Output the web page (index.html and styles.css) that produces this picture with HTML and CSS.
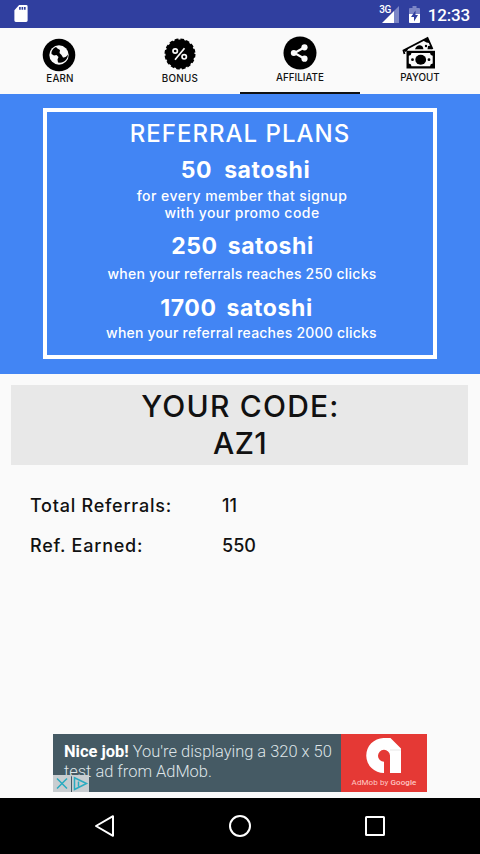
FILE: index.html
```html
<!DOCTYPE html>
<html lang="en">
<head>
    <meta charset="UTF-8">
    <meta name="viewport" content="width=device-width, initial-scale=1.0">

    <title>Affiliate</title>

    <link rel="stylesheet" href="styles.css">
</head>
<body>

    <div class="screen">

        <div class="status-bar">
            <svg class="sd-card" width="14" height="17" viewBox="0 0 14 18">
                <path d="M5 0h7.500a1.500 1.500 0 0 1 1.500 1.500v15a1.500 1.500 0 0 1-1.500 1.500h-11A1.500 1.500 0 0 1 0 16.500V5.500z" fill="#fff"/>
                <path d="M5 2h1.700v3H5zM7.600 2h1.700v3H7.600zM10.200 2h1.700v3h-1.700z" fill="#303f9f"/>
            </svg>
            <div class="status-icons">
                <span class="network">3G</span>
                <svg class="signal" width="17" height="17" viewBox="0 0 17 17">
                    <path d="M17 0v17h-5V5z" fill="#7c86c6"/>
                    <path d="M12 5v12H0z" fill="#fff"/>
                </svg>
                <svg class="battery" width="11" height="17" viewBox="0 0 11 17">
                    <path d="M3.500 0h4v2H10a1 1 0 0 1 1 1v13a1 1 0 0 1-1 1H1a1 1 0 0 1-1-1V3a1 1 0 0 1 1-1h2.500z" fill="#7c86c6"/>
                    <path d="M0 8h11v8a1 1 0 0 1-1 1H1a1 1 0 0 1-1-1z" fill="#fff"/>
                    <path d="M6.500 4.500L2 11h3v4.500L9 9H6.500z" fill="#303f9f"/>
                </svg>
                <span class="clock">12:33</span>
            </div>
        </div>

        <div class="tabs">
            <div class="tab tab-earn">
                <svg width="34" height="34" viewBox="0 0 34 34">
                    <circle cx="17" cy="17" r="16.300"/>
                    <circle cx="17" cy="17" r="9.700" fill="#fafafa"/>
                    <path d="M9.500 14c.8-2.500 2.500-4.200 4.500-5l1.500 1.500 2.500 1.500-.5 3 2 2 1.500 2.500c2 .3 3.500-1 5-3-.3 4.500-3.500 8-8 8.300l-2-.3-.5-3 1-2.500-2-2-2.500.5-2.500-1.500z"/>
                </svg>
                <span>EARN</span>
            </div>
            <div class="tab tab-bonus">
                <svg width="34" height="34" viewBox="0 0 34 34">
                    <circle cx="17" cy="17" r="14.500"/>
                    <circle cx="17" cy="17" r="14.300" fill="none" stroke="#000" stroke-width="2.400" stroke-dasharray="3.600 2.016"/>
                    <g fill="none" stroke="#fafafa" stroke-width="1.700">
                        <circle cx="12.200" cy="14" r="2.200"/>
                        <circle cx="21.200" cy="19.800" r="2.200"/>
                        <path d="M21.500 11.200l-9.500 11.500"/>
                    </g>
                </svg>
                <span>BONUS</span>
            </div>
            <div class="tab tab-affiliate active">
                <svg width="34" height="34" viewBox="0 0 34 34">
                    <circle cx="17" cy="17" r="16.500"/>
                    <path d="M21.500 11.200L11.500 17l10 5.800" fill="none" stroke="#fafafa" stroke-width="2.200"/>
                    <g fill="#fafafa">
                        <circle cx="10.800" cy="17" r="3"/>
                        <circle cx="21.500" cy="11.300" r="3.100"/>
                        <circle cx="21.500" cy="22.700" r="3.100"/>
                    </g>
                </svg>
                <span>AFFILIATE</span>
            </div>
            <div class="tab tab-payout">
                <svg width="36" height="34" viewBox="0 0 36 34">
                    <path d="M3.500 18L2.500 14.500 26.500 2l5 11" fill="none" stroke="#000" stroke-width="1.800"/>
                    <path d="M3 14l4.500-2-1.500 3-2 1zM22 4.500l4.500-2.500L28.500 7l-3-.5zM14 13.300c1-2.700 3-4.300 5-4 2.200.3 3.300 1.700 3.400 4z"/>
                    <path d="M27 10l3-.5 1.500 3.800h-5z"/>
                    <circle cx="25" cy="10" r="1.200"/>
                    <rect x="5.500" y="14.800" width="28.500" height="17.700"/>
                    <path d="M10.500 17h18.500a3 3 0 0 0 2.700 2.700v7.900a3 3 0 0 0-2.700 2.700H10.500a3 3 0 0 0-2.700-2.700v-7.900A3 3 0 0 0 10.500 17z" fill="#fafafa"/>
                    <ellipse cx="19.700" cy="23.700" rx="5.400" ry="5"/>
                    <circle cx="11.500" cy="23.700" r="1.400"/>
                    <circle cx="28" cy="23.700" r="1.400"/>
                </svg>
                <span>PAYOUT</span>
            </div>
        </div>

        <div class="plans">
            <div class="plans-box">
                <h1 class="plans-title">REFERRAL PLANS</h1>
                <div class="plan-amount amount-50"><span>50</span><span>satoshi</span></div>
                <div class="plan-text text-50">for every member that signup<br>with your promo code</div>
                <div class="plan-amount amount-250"><span>250</span><span>satoshi</span></div>
                <div class="plan-text text-250">when your referrals reaches 250 clicks</div>
                <div class="plan-amount amount-1700"><span>1700</span><span>satoshi</span></div>
                <div class="plan-text text-1700">when your referral reaches 2000 clicks</div>
            </div>
        </div>

        <div class="code-box">
            <div class="code-label">YOUR CODE:</div>
            <div class="code-value">AZ1</div>
        </div>

        <div class="stats">
            <span class="stat-name">Total Referrals:</span>
            <span>11</span>
            <span class="stat-name">Ref. Earned:</span>
            <span>550</span>
        </div>

        <div class="ad">
            <div class="ad-text"><b>Nice job!</b> You're displaying a 320 x 50<br>test ad from AdMob.</div>
            <div class="ad-logo">
                <svg width="36" height="36" viewBox="0 0 36 36">
                    <path d="M17.500 0h7L35 10.500V35H24V17.500a6 6 0 1 0-6 6.300V35A17.500 17.500 0 0 1 17.500 0z" fill="#fff"/>
                    <path d="M24 12h11" stroke="#ddd" stroke-width=".7"/>
                </svg>
                <div class="ad-brand">AdMob by <b>Google</b></div>
            </div>
            <div class="ad-badges">
                <svg width="18" height="17" viewBox="0 0 18 17">
                    <path d="M4 3.500l10 10M14 3.500l-10 10" stroke="#2aabc0" stroke-width="1.500"/>
                </svg>
                <svg width="17" height="17" viewBox="0 0 17 17">
                    <path d="M2.500 2.800L14.500 8.500l-12 6zM6.500 6.500v5" fill="none" stroke="#2aabc0" stroke-width="1.500"/>
                </svg>
            </div>
        </div>

        <div class="nav-bar">
            <svg width="24" height="24" viewBox="0 0 24 24"><path d="M20 2.200v19.600L3 12z"/></svg>
            <svg width="24" height="24" viewBox="0 0 24 24"><circle cx="12" cy="12" r="10"/></svg>
            <svg width="24" height="24" viewBox="0 0 24 24"><rect x="3" y="3" width="18" height="18" rx=".5"/></svg>
        </div>

    </div>

</body>
</html>
```
FILE: styles.css
```css
body {
    margin: 0;
    background: #fafafa;
    font-family: Inter, "Open Sans", sans-serif;
    color: #111;
}
.screen {
    display: flex;
    flex-direction: column;
    width: 480px;
    height: 854px;
    overflow: hidden;
}
.status-bar {
    display: flex;
    justify-content: space-between;
    height: 28px;
    box-sizing: border-box;
    padding: 5px 10px 0 14px;
    background: #303f9f;
    color: #fff;
    font-family: Roboto, sans-serif;
}
.status-icons {
    display: flex;
    align-items: flex-start;
}
.network {
    font-size: 10px;
    line-height: 10px;
    font-weight: 500;
    letter-spacing: -0.5px;
    margin-right: -9px;
}
.signal {
    margin-top: 1px;
}
.battery {
    margin: 1px 8px 0 10px;
}
.clock {
    font-size: 17px;
    line-height: 20px;
    font-weight: 500;
    letter-spacing: -0.2px;
}
.tabs {
    display: flex;
    height: 66px;
}
.tab {
    display: flex;
    flex-direction: column;
    align-items: center;
    box-sizing: border-box;
    width: 120px;
    padding-top: 8px;
    font-size: 9.8px;
    line-height: 12px;
    font-weight: 500;
}
.tab.active {
    border-bottom: 2px solid #111;
}
.tab-earn {
    padding-top: 10px;
    letter-spacing: 0.2px;
}
.tab-earn svg {
    margin: 0 3px 1px 0;
}
.tab-affiliate svg {
    margin-bottom: 2px;
}
.tab-bonus {
    padding-top: 9px;
    letter-spacing: 0.3px;
}
.tab-bonus svg {
    margin-bottom: 2px;
}
.tab-payout svg {
    margin: 0 3px 2px 0;
}
.plans {
    height: 280px;
    box-sizing: border-box;
    padding: 14px 43px 15px;
    background: #4285f4;
}
.plans-box {
    box-sizing: border-box;
    height: 251px;
    border: 4px solid #fff;
    padding-top: 7px;
    color: #fff;
    text-align: center;
}
.plans-title {
    margin: 0;
    font-size: 24px;
    line-height: 30px;
    font-weight: 500;
    letter-spacing: 1px;
}
.plan-amount {
    display: flex;
    justify-content: center;
    gap: 10px;
    font-size: 23px;
    line-height: 28px;
    font-weight: 700;
    letter-spacing: 0.6px;
}
.plan-text {
    font-size: 14px;
    line-height: 17px;
    font-weight: 500;
    letter-spacing: 0.22px;
}
.amount-50 {
    gap: 12px;
    margin-top: 7px;
    padding-left: 11px;
}
.text-50 {
    margin: 3px 0 0 4px;
    letter-spacing: 0.45px;
}
.amount-250 {
    margin-top: 11px;
    padding-left: 5px;
}
.text-250 {
    margin: 5px 0 0 4px;
}
.amount-1700 {
    margin-top: 12px;
    padding-right: 7px;
}
.text-1700 {
    margin: 2px 0 0 3px;
}
.code-box {
    box-sizing: border-box;
    height: 80px;
    margin: 11px 12px 0 11px;
    padding-top: 3px;
    background: #e8e8e8;
    font-size: 30px;
    line-height: 37px;
    font-weight: 500;
    text-align: center;
}
.code-label {
    letter-spacing: 1.2px;
    padding-left: 2px;
}
.code-value {
    letter-spacing: 0.3px;
    padding-left: 1px;
}
.stats {
    display: grid;
    grid-template-columns: 192px auto;
    margin: 21px 0 0 30px;
    font-size: 18px;
    line-height: 40px;
    font-weight: 500;
}
.stat-name {
    letter-spacing: 0.75px;
}
.ad {
    position: relative;
    display: flex;
    width: 374px;
    height: 58px;
    margin: auto auto 6px 53px;
    background: #455a64;
    font-family: Roboto, sans-serif;
}
.ad-text {
    box-sizing: border-box;
    width: 288px;
    padding: 8px 0 0 11px;
    color: #dfe5e8;
    font-size: 16.45px;
    line-height: 20px;
    font-weight: 300;
    white-space: nowrap;
}
.ad-text b {
    color: #fff;
    font-weight: 700;
}
.ad-logo {
    display: flex;
    flex-direction: column;
    align-items: center;
    width: 86px;
    padding-top: 4px;
    background: #e53935;
}
.ad-brand {
    margin-top: 4px;
    color: #ffc9c5;
    font-size: 8px;
    line-height: 10px;
    letter-spacing: 0.1px;
}
.ad-brand b {
    font-weight: 500;
}
.ad-badges {
    position: absolute;
    left: 0;
    bottom: 0;
    display: flex;
    gap: 1px;
}
.ad-badges svg {
    background: #c8cdd0;
}
.nav-bar {
    display: flex;
    justify-content: center;
    gap: 111px;
    height: 56px;
    align-items: center;
    background: #000;
}
.nav-bar svg {
    fill: none;
    stroke: #fff;
    stroke-width: 2;
    stroke-linejoin: round;
}
```
